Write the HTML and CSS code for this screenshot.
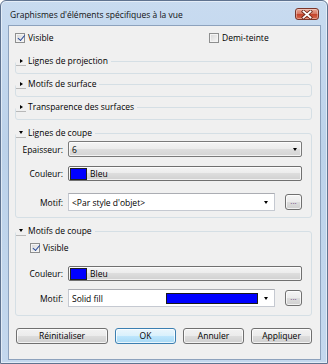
FILE: index.html
```html
<!DOCTYPE html>
<html>
<head>
<meta charset="utf-8">
<title>Graphismes d'éléments spécifiques à la vue</title>
<link rel="stylesheet" href="styles.css">
</head>
<body>

<div class="window">
    <div class="titlebar">
        <span class="title">Graphismes d'éléments spécifiques à la vue</span>
        <span class="close">
            <svg width="12" height="9" viewBox="0 0 12 9">
                <path d="M2.5 1.5 L9.5 7.5 M9.5 1.5 L2.5 7.5" stroke="#6b2418" stroke-width="3.4" stroke-linecap="square"/>
                <path d="M2.5 1.5 L9.5 7.5 M9.5 1.5 L2.5 7.5" stroke="#fff" stroke-width="1.8" stroke-linecap="square"/>
            </svg>
        </span>
    </div>

    <div class="client">
        <div class="toprow">
            <span class="check"><span class="box checked"></span>Visible</span>
            <span class="check"><span class="box"></span>Demi-teinte</span>
        </div>

        <fieldset class="group collapsed first">
            <legend><span class="toggle closed"></span>Lignes de projection</legend>
        </fieldset>
        <fieldset class="group collapsed">
            <legend><span class="toggle closed"></span>Motifs de surface</legend>
        </fieldset>
        <fieldset class="group collapsed">
            <legend><span class="toggle closed"></span>Transparence des surfaces</legend>
        </fieldset>

        <fieldset class="group open cut-lines">
            <legend><span class="toggle"></span>Lignes de coupe</legend>
            <div class="row r-weight">
                <span class="lbl">Epaisseur:</span>
                <span class="combo list"><span class="val">6</span><span class="arrow"></span></span>
            </div>
            <div class="row r-colour">
                <span class="lbl">Couleur:</span>
                <span class="colourbtn"><span class="swatch"></span>Bleu</span>
            </div>
            <div class="row r-pattern">
                <span class="lbl">Motif:</span>
                <span class="ctl">
                    <span class="combo edit"><span class="val">&lt;Par style d'objet&gt;</span><span class="arrow"></span></span>
                    <span class="more">...</span>
                </span>
            </div>
        </fieldset>

        <fieldset class="group open cut-patterns">
            <legend><span class="toggle"></span>Motifs de coupe</legend>
            <div class="vis">
                <span class="check"><span class="box checked"></span>Visible</span>
            </div>
            <div class="row r-colour2">
                <span class="lbl">Couleur:</span>
                <span class="colourbtn"><span class="swatch"></span>Bleu</span>
            </div>
            <div class="row r-pattern2">
                <span class="lbl">Motif:</span>
                <span class="ctl">
                    <span class="combo edit"><span class="val">Solid fill</span><span class="fill"></span><span class="arrow"></span></span>
                    <span class="more">...</span>
                </span>
            </div>
        </fieldset>

        <div class="buttons">
            <span class="btn reset">Réinitialiser</span>
            <span class="btn default">OK</span>
            <span class="btn">Annuler</span>
            <span class="btn">Appliquer</span>
        </div>
    </div>
</div>

</body>
</html>
```

FILE: styles.css
```css
* {
    box-sizing: border-box;
}
BODY {
    margin: 0;
    background: #fff;
    font-family: "Open Sans", "Noto Sans", sans-serif;
    font-size: 8.5px;
    color: #000;
}

/* window frame */
.window {
    width: 328px;
    height: 364px;
    border: 1px solid #5f7390;
    border-radius: 6px 6px 0 0;
    background: linear-gradient(#c8dbf0, #bcd2ea 40%, #c4d8ee);
    box-shadow: inset 0 0 0 1px rgba(255,255,255,.5);
    padding: 0 6px 3px 7px;
    display: flex;
    flex-direction: column;
}
.titlebar {
    height: 24px;
    padding: 2px 2px 0 2px;
    display: flex;
    align-items: center;
}
.title {
    flex: 1;
    color: #111;
}
.close {
    width: 24px;
    height: 12px;
    border: 1px solid #7b3529;
    border-radius: 3px;
    background: linear-gradient(#eaa999, #d77b66 45%, #c4452d 55%, #d86a4f);
    box-shadow: inset 0 0 0 1px rgba(255,255,255,.35);
    display: flex;
    align-items: center;
    justify-content: center;
}
.close svg {
    display: block;
}
.client {
    flex: 1;
    background: #f0f0f0;
    border: 1px solid #8da2bd;
    display: flex;
    flex-direction: column;
}

/* checkboxes */
.toprow {
    margin: 6px 0 0 6px;
    height: 12px;
    display: grid;
    grid-template-columns: 194px auto;
    align-items: center;
}
.check {
    display: inline-flex;
    align-items: center;
    gap: 3px;
    line-height: 12px;
}
.box {
    width: 10px;
    height: 10px;
    border: 1px solid #8e8f8f;
    background: linear-gradient(135deg, #d6d6d6, #f8f8f8);
    box-shadow: inset 0 0 0 1px #f4f4f4;
}
.box.checked {
    background: linear-gradient(135deg, #d6d6d6, #f8f8f8) no-repeat;
    position: relative;
}
.box.checked::after {
    content: "";
    display: block;
    width: 3px;
    height: 6px;
    margin: 0 0 0 3px;
    border-right: 1.5px solid #2b4c9a;
    border-bottom: 1.5px solid #2b4c9a;
    transform: rotate(40deg) translate(0, -0.5px);
}

/* collapsible group boxes */
.group {
    margin: 4px 8px 0 6px;
    padding: 0 9px 6px 0;
    border: 1px solid #d5dfe5;
    border-radius: 3px;
    min-width: 0;
}
.group.first {
    margin-top: 11px;
}
.group.open {
    margin-top: 7px;
}
.group.cut-patterns {
    padding-bottom: 8px;
}
.group legend {
    padding: 0 3px 0 0;
    height: 12px;
    line-height: 12px;
    display: flex;
    align-items: center;
    background: #f0f0f0;
}
.toggle {
    width: 10px;
    height: 10px;
    margin-right: 2px;
    border-bottom: 1px solid #b8b8b8;
    display: inline-flex;
    align-items: center;
    justify-content: center;
}
.toggle::before {
    content: "";
    border-left: 2.5px solid transparent;
    border-right: 2.5px solid transparent;
    border-top: 3px solid #000;
}
.toggle.closed::before {
    border-top: 2.5px solid transparent;
    border-bottom: 2.5px solid transparent;
    border-left: 3px solid #000;
    border-right: 0;
}

/* label / control rows */
.row {
    padding-left: 0;
    display: grid;
    grid-template-columns: 47px 1fr;
    column-gap: 5px;
    align-items: center;
}
.lbl {
    text-align: right;
}
.r-weight {
    margin-top: 2px;
    height: 16px;
}
.r-colour {
    margin-top: 9px;
    height: 15px;
}
.r-pattern {
    margin-top: 12px;
    height: 18px;
}
.vis {
    margin-top: 4px;
    height: 14px;
    padding-left: 14px;
    display: flex;
    align-items: center;
}
.r-colour2 {
    margin-top: 11px;
    height: 15px;
}
.r-pattern2 {
    margin-top: 8px;
    height: 18px;
}
.ctl {
    height: 100%;
    display: flex;
    align-items: center;
    gap: 10px;
}

/* combos and buttons */
.combo {
    height: 100%;
    display: flex;
    align-items: center;
}
.combo .val {
    flex: 1;
    padding-left: 3px;
    white-space: nowrap;
}
.combo.list {
    border: 1px solid #7a7a7a;
    border-radius: 2px;
    background: linear-gradient(#f4f4f4, #ebebeb 50%, #dedede 50%, #d4d4d4);
    box-shadow: inset 0 0 0 1px rgba(255,255,255,.7);
}
.combo.list .arrow {
    width: 13px;
}
.combo.edit {
    flex: 1;
    border: 1px solid #c5c9d1;
    border-top-color: #abadb3;
    background: #fff;
}
.combo.edit .arrow {
    width: 16px;
}
.arrow {
    display: flex;
    justify-content: center;
}
.arrow::before {
    content: "";
    border-left: 2.5px solid transparent;
    border-right: 2.5px solid transparent;
    border-top: 3px solid #000;
}
.fill {
    width: 92px;
    height: 11px;
    background: #0000ff;
    border: 1px solid #1a1a1a;
}
.colourbtn {
    height: 100%;
    border: 1px solid #707070;
    border-radius: 2px;
    background: linear-gradient(#f4f4f4, #ebebeb 50%, #dddddd 50%, #d0d0d0);
    box-shadow: inset 0 0 0 1px rgba(255,255,255,.7);
    padding-left: 1px;
    display: flex;
    align-items: center;
    gap: 3px;
}
.swatch {
    width: 17px;
    height: 12px;
    background: #0000ff;
    border: 1px solid #202020;
}
.more {
    width: 17px;
    height: 16px;
    border: 1px solid #707070;
    border-radius: 3px;
    background: linear-gradient(#f4f4f4, #ebebeb 50%, #dddddd 50%, #d0d0d0);
    box-shadow: inset 0 0 0 1px rgba(255,255,255,.7);
    color: #6a4a7a;
    font-size: 8px;
    line-height: 11px;
    text-align: center;
}

.buttons {
    margin: 12px 0 0 7px;
    display: flex;
    gap: 7px;
}
.btn {
    width: 61px;
    height: 16px;
    border: 1px solid #707070;
    border-radius: 3px;
    background: linear-gradient(#f2f2f2, #ebebeb 50%, #dddddd 50%, #cfcfcf);
    box-shadow: inset 0 0 0 1px rgba(255,255,255,.75);
    line-height: 14px;
    text-align: center;
}
.btn.reset {
    width: 92px;
}
.btn.default {
    border-color: #3c7fb1;
    background: linear-gradient(#eaf6fd, #d9f0fc 50%, #bee6fd 50%, #a7d9f5);
}
```
